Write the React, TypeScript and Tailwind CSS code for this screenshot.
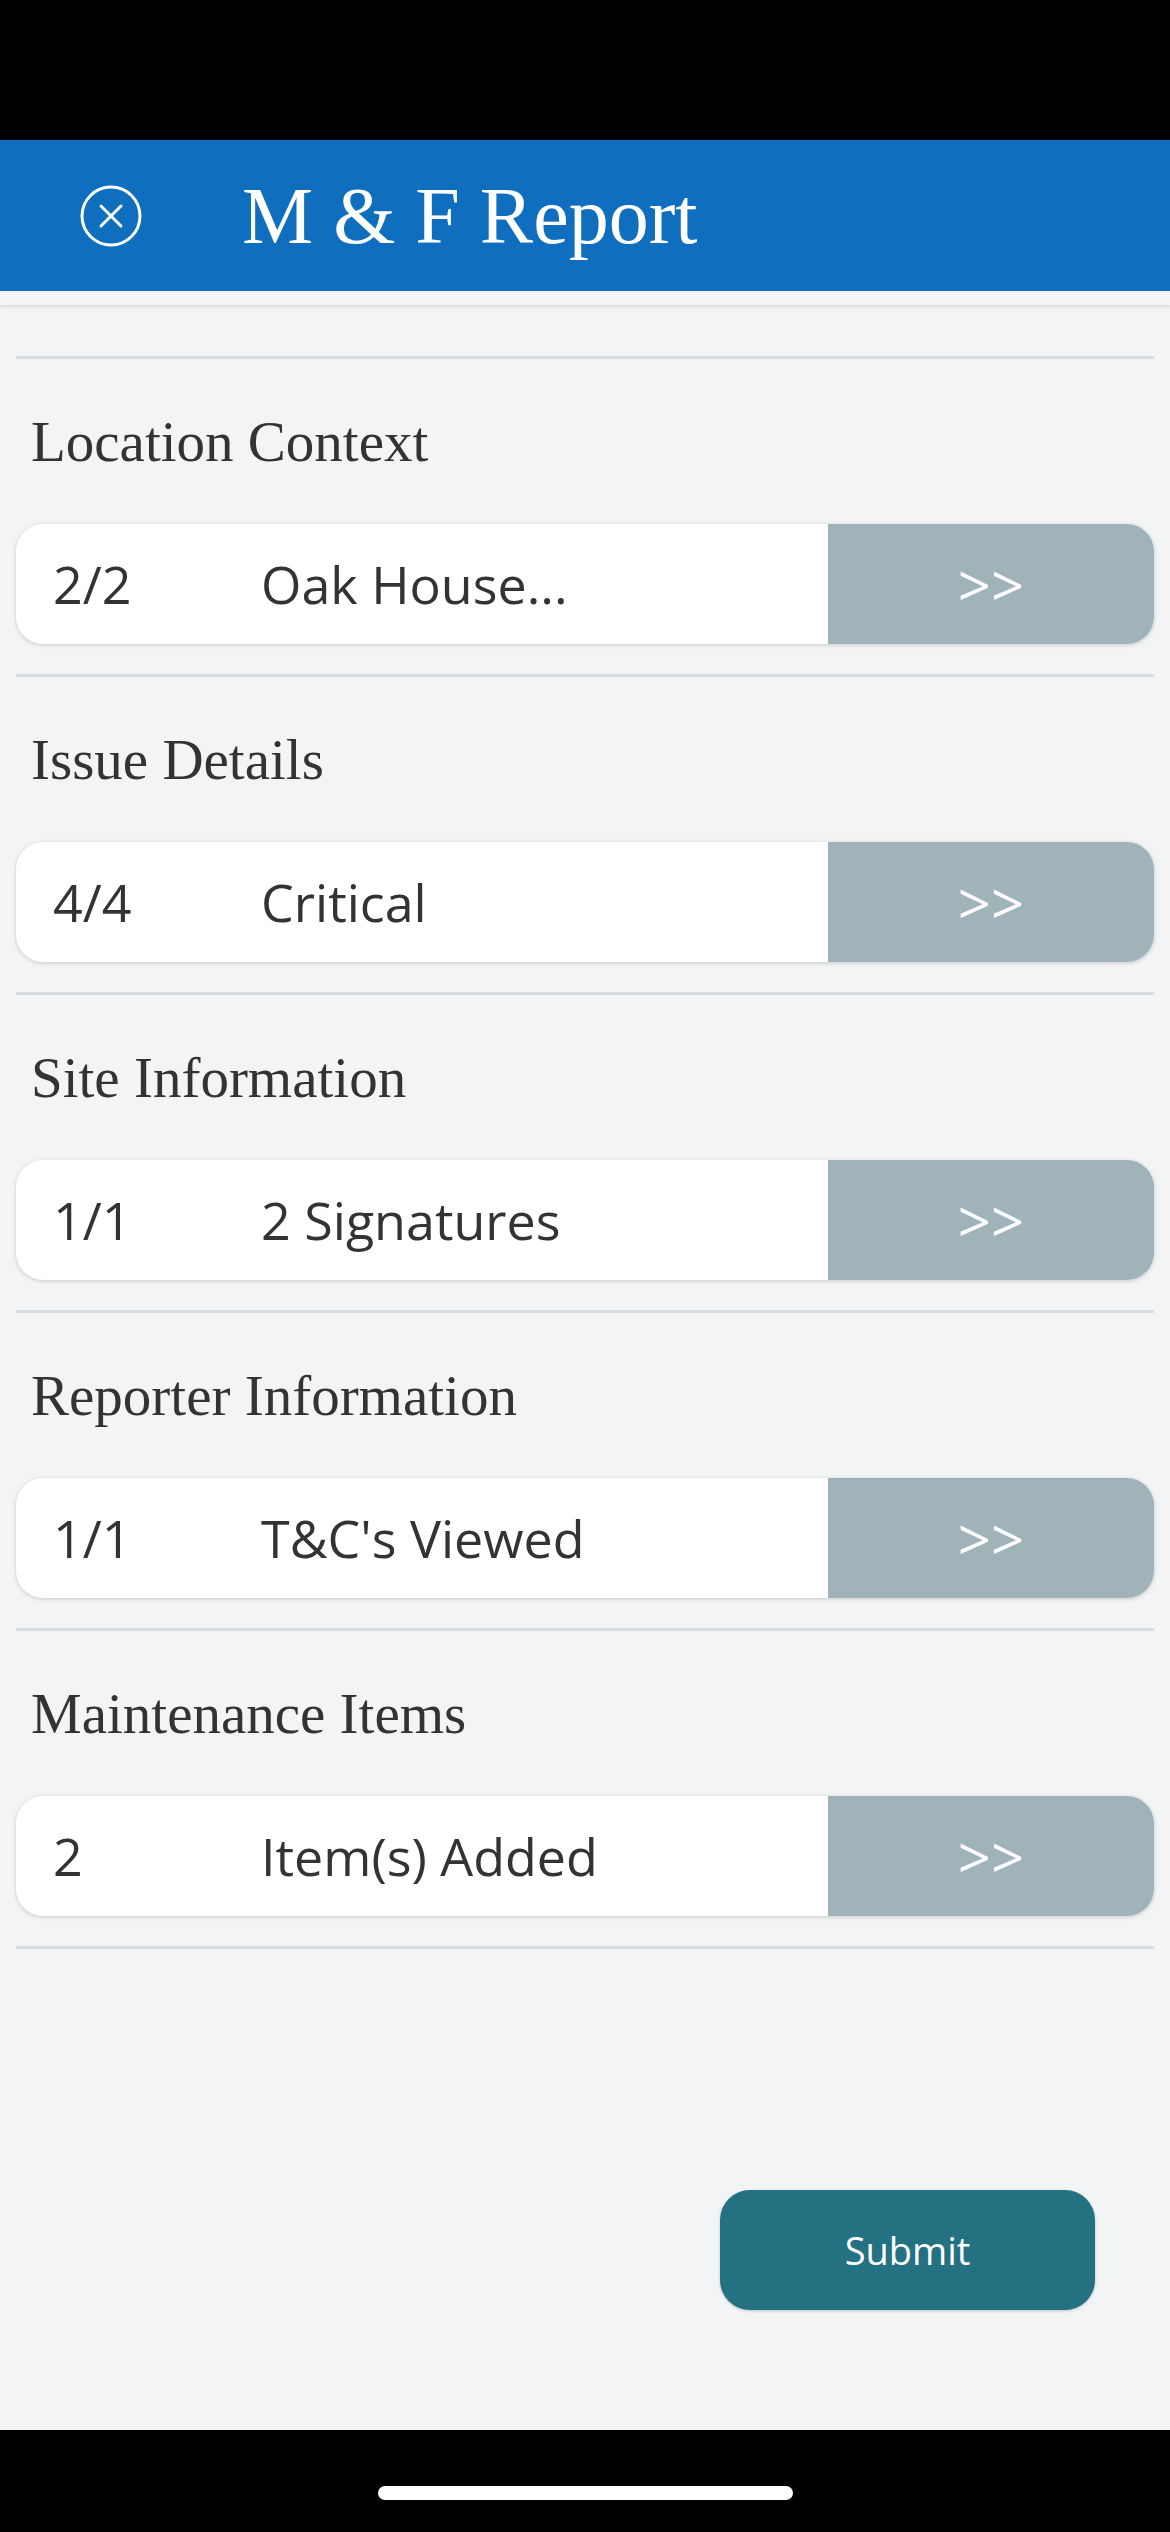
import React from "react";

const sections = [
  { title: "Location Context", count: "2/2", value: "Oak House..." },
  { title: "Issue Details", count: "4/4", value: "Critical" },
  { title: "Site Information", count: "1/1", value: "2 Signatures" },
  { title: "Reporter Information", count: "1/1", value: "T&C's Viewed" },
  { title: "Maintenance Items", count: "2", value: "Item(s) Added" },
];

const serif = "font-['Liberation_Serif',serif]";
const sans = "font-['Open_Sans',sans-serif]";

function CloseIcon() {
  return (
    <svg width="62" height="62" viewBox="0 0 62 62" fill="none" stroke="white" strokeWidth="3" strokeLinecap="round">
      <circle cx="31" cy="31" r="29" />
      <path d="M21 21 L41 41 M41 21 L21 41" />
    </svg>
  );
}

function SectionRow({ title, count, value }: { title: string; count: string; value: string }) {
  return (
    <section>
      <div className="h-[3px] bg-[#d6dce0]" />
      <div className="flex h-[165px] items-center pl-[15px]">
        <h2 className={`${serif} text-[57px] leading-none text-[#333333]`}>{title}</h2>
      </div>
      <div className="flex h-[120px] overflow-hidden rounded-[27px] bg-white shadow-[0_1px_4px_rgba(0,0,0,0.18)]">
        <div className={`${sans} flex flex-1 items-center text-[52px] text-[#333333]`}>
          <span className="w-[245px] shrink-0 pl-[37px]">{count}</span>
          <span>{value}</span>
        </div>
        <button className={`${sans} flex w-[326px] items-center justify-center bg-[#9fb3b9] text-[58px] text-white`}>
          &gt;&gt;
        </button>
      </div>
      <div className="h-[30px]" />
    </section>
  );
}

export default function App() {
  return (
    <div className="flex h-[2532px] w-full flex-col bg-[#f3f4f6]">
      <div className="h-[140px] bg-black" />
      <header className="flex h-[151px] items-center bg-[#106ebe] pl-[80px]">
        <CloseIcon />
        <h1 className={`${serif} ml-[100px] text-[80px] leading-none text-white`}>M &amp; F Report</h1>
      </header>
      <div className="h-[14px] bg-[#f4f5f6] shadow-[0_2px_3px_rgba(0,0,0,0.12)]" />

      <main className="px-[16px] pt-[51px]">
        {sections.map((s) => (
          <SectionRow key={s.title} {...s} />
        ))}
        <div className="h-[3px] bg-[#d6dce0]" />
        <div className="mt-[241px] flex justify-end pr-[59px]">
          <button className={`${sans} h-[120px] w-[375px] rounded-[30px] bg-[#247182] text-[38px] text-white shadow-[0_1px_3px_rgba(0,0,0,0.2)]`}>
            Submit
          </button>
        </div>
      </main>

      <div className="mt-auto flex h-[102px] items-center justify-center bg-black">
        <div className="mt-[24px] h-[14px] w-[415px] rounded-full bg-white" />
      </div>
    </div>
  );
}
